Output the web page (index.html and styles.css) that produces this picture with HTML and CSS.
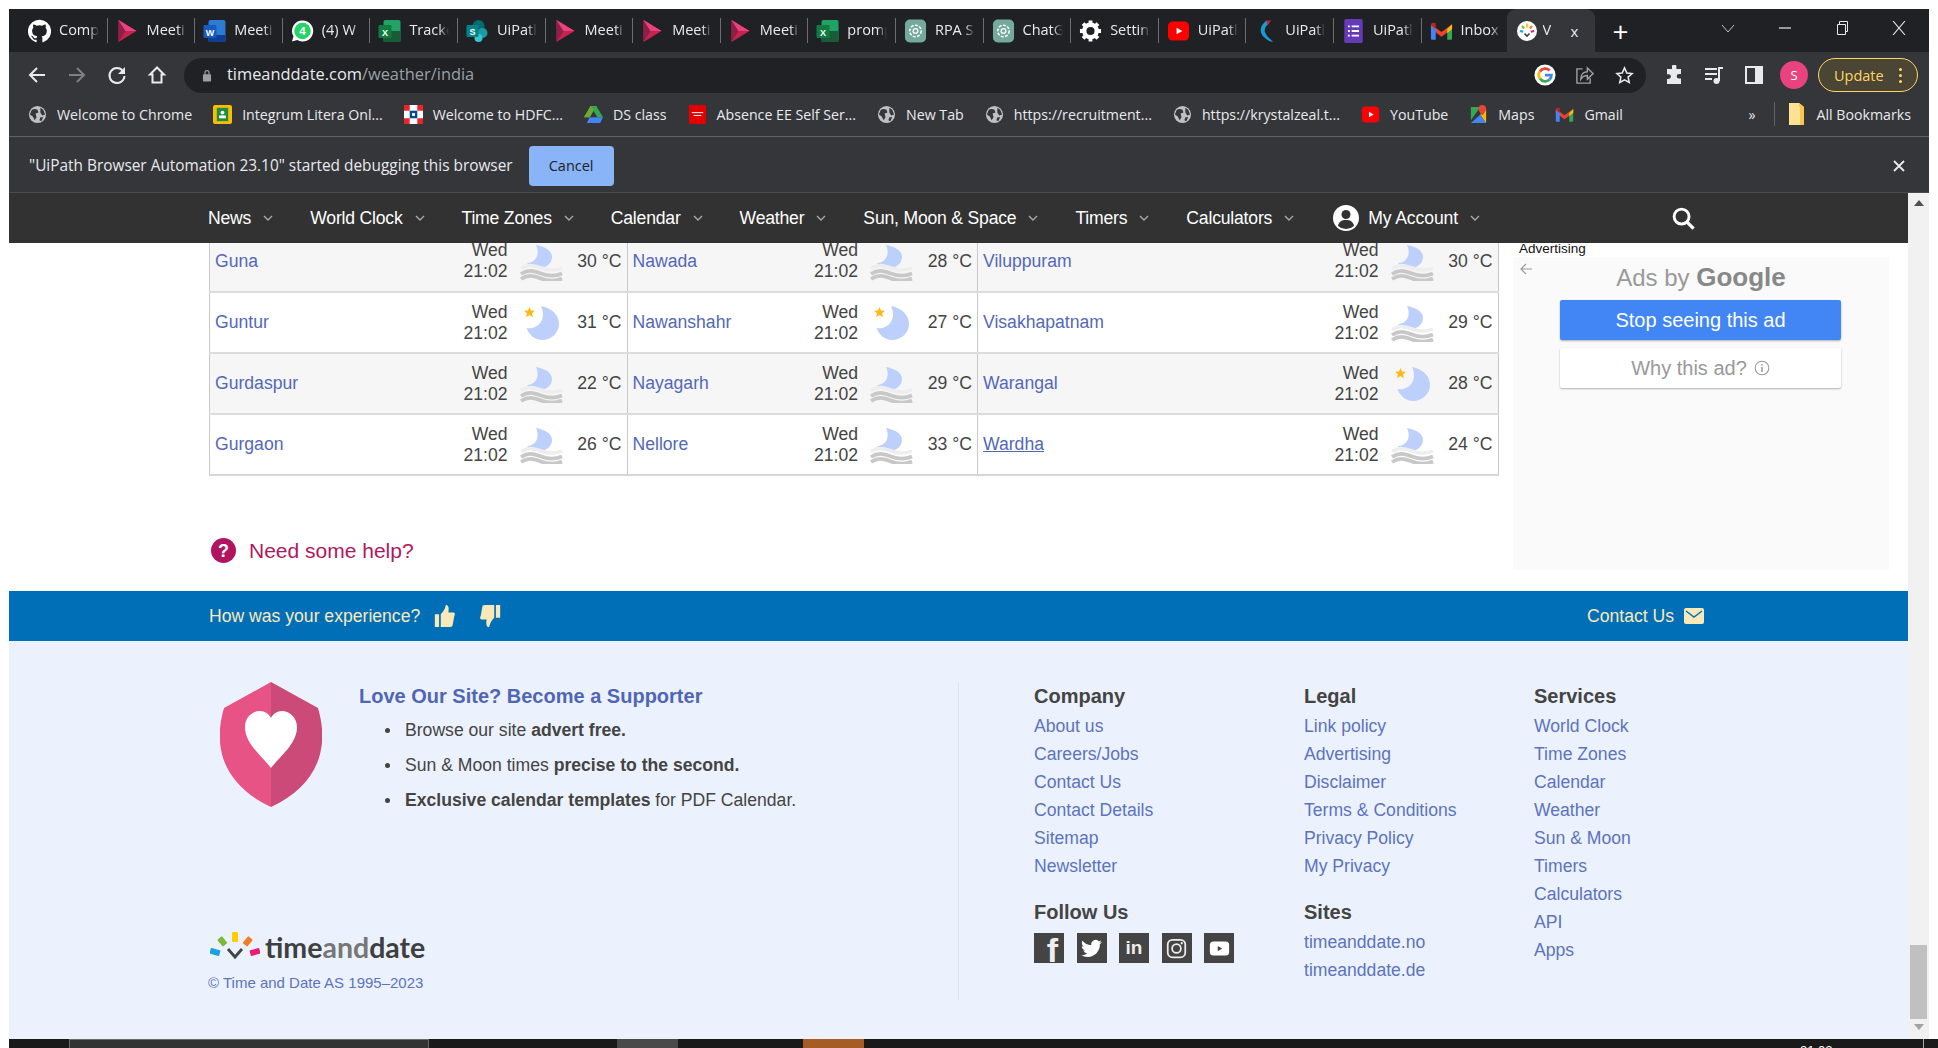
FILE: index.html
```html
<!DOCTYPE html>
<html lang="en">
<head>
    <meta charset="UTF-8">
    <title>Weather in India</title>
    <link rel="stylesheet" href="styles.css">
</head>
<body>
<svg class="sprite" width="0" height="0">
    <symbol id="i-github" viewBox="0 0 24 24"><path fill="#fff" d="M12 .3a12 12 0 0 0-3.8 23.4c.6.1.8-.3.8-.6v-2c-3.3.7-4-1.6-4-1.6-.6-1.4-1.4-1.8-1.4-1.8-1-.7.1-.7.1-.7 1.2 0 1.9 1.2 1.9 1.2 1 1.8 2.8 1.3 3.5 1 0-.8.4-1.3.7-1.6-2.7-.3-5.5-1.3-5.5-6 0-1.2.5-2.3 1.3-3.1-.2-.4-.6-1.6 0-3.2 0 0 1-.3 3.4 1.2a11.5 11.5 0 0 1 6 0c2.3-1.5 3.3-1.2 3.3-1.2.6 1.6.2 2.8 0 3.2.9.8 1.3 1.9 1.3 3.2 0 4.6-2.8 5.6-5.5 5.9.5.4.9 1 .9 2.2v3.3c0 .3.1.7.8.6A12 12 0 0 0 12 .3"/></symbol>
    <symbol id="i-meet" viewBox="0 0 20 24"><path fill="#c8234e" d="M1 1l18 11L1 23z"/><path fill="#8c2146" d="M1 1l7 11-7 11z"/><path fill="#e8437f" d="M8 12L1 1l18 11z"/></symbol>
    <symbol id="i-word" viewBox="0 0 22 24"><rect x="5" y="1" width="17" height="22" rx="2" fill="#2b7cd3"/><rect x="5" y="16" width="17" height="7" fill="#103f91"/><rect x="0" y="6" width="13" height="13" rx="1" fill="#185abd"/><text x="6.5" y="16.5" class="ico-txt">W</text></symbol>
    <symbol id="i-excel" viewBox="0 0 22 24"><rect x="5" y="1" width="17" height="22" rx="2" fill="#21a366"/><rect x="5" y="12" width="17" height="11" fill="#185c37"/><rect x="0" y="6" width="13" height="13" rx="1" fill="#107c41"/><text x="6.5" y="16.5" class="ico-txt">X</text></symbol>
    <symbol id="i-whatsapp" viewBox="0 0 24 24"><path fill="#fff" d="M12 1a11 11 0 0 0-9.4 16.6L1 23l5.6-1.5A11 11 0 1 0 12 1z"/><circle cx="12" cy="12" r="8.6" fill="#25d366"/><text x="12" y="16.5" class="ico-txt ico-big">4</text></symbol>
    <symbol id="i-share" viewBox="0 0 22 24"><circle cx="12" cy="7" r="6" fill="#036c70"/><circle cx="16" cy="14" r="5" fill="#1a9ba1"/><circle cx="12" cy="19" r="4" fill="#37c6d0"/><rect x="0" y="6" width="12" height="12" rx="1" fill="#038387"/><text x="6" y="16" class="ico-txt">S</text></symbol>
    <symbol id="i-gpt" viewBox="0 0 24 24"><rect x="1" width="22" height="24" rx="5" fill="#74aa9c"/><circle cx="12" cy="12" r="6" fill="none" stroke="#fff" stroke-width="1.6" stroke-dasharray="3 1.5"/><circle cx="12" cy="12" r="2.5" fill="none" stroke="#fff" stroke-width="1.3"/></symbol>
    <symbol id="i-gear" viewBox="0 0 24 24"><circle cx="12" cy="12" r="6.5" fill="none" stroke="#fff" stroke-width="4.5"/><path stroke="#fff" stroke-width="4" d="M12 1v5M12 18v5M1 12h5M18 12h5M4.2 4.2l3.6 3.6M16.2 16.2l3.6 3.6M4.2 19.8l3.6-3.6M16.2 7.8l3.6-3.6"/></symbol>
    <symbol id="i-yt" viewBox="0 0 24 24"><rect x="1" y="2" width="22" height="20" rx="5" fill="#f00"/><path fill="#fff" d="M10 8.500l6 3.500-6 3.500z"/></symbol>
    <symbol id="i-k" viewBox="0 0 24 24"><path fill="#1a9ad6" d="M16 4C9 9 9 15 20 23l-3 0C6 17 3 9 13 1z"/><path fill="#c0272d" d="M13 1h5l-4 5z"/></symbol>
    <symbol id="i-forms" viewBox="0 0 20 26"><rect width="20" height="26" rx="2" fill="#673ab7"/><path stroke="#fff" stroke-width="2" d="M4 8h2M8 8h8M4 13h2M8 13h8M4 18h2M8 18h8"/></symbol>
    <symbol id="i-gmail" viewBox="0 0 24 20"><path fill="#ea4335" d="M1 3l11 8 11-8v5l-11 8L1 8z"/><path fill="#4285f4" d="M1 4v14a1 1 0 0 0 1 1h4V8z"/><path fill="#34a853" d="M23 4v14a1 1 0 0 1-1 1h-4V8z"/><path fill="#fbbc04" d="M18 8l5-5v5l-5 4z"/><path fill="#c5221f" d="M1 3c1-2 3-2 5-1v6L1 4z"/></symbol>
    <symbol id="i-tad" viewBox="0 0 24 24"><circle cx="12" cy="12" r="12" fill="#fff"/><rect x="11" y="3" width="2.500" height="5" fill="#fc0"/><path stroke="#7ab939" stroke-width="2.500" d="M6 6l2.500 3"/><path stroke="#f07f23" stroke-width="2.500" d="M18 6l-2.500 3"/><path stroke="#1aa3dc" stroke-width="2.500" d="M3.500 12l4 1"/><path stroke="#e91e72" stroke-width="2.500" d="M20.500 12l-4 1"/><path fill="none" stroke="#444" stroke-width="2" d="M9 15l3 3 3-3"/></symbol>
    <symbol id="i-globe" viewBox="0 0 20 20"><circle cx="10" cy="10" r="9" fill="#bdc1c6"/><path fill="#35363a" d="M4 5c2-1 4-1 6 0l1 3-3 1 1 4-2 3-2-4-3-2zM13 3l3 2 2 5-3 1-2-3zM13 13l3 0-2 4-2-1z"/></symbol>
    <symbol id="i-fog" viewBox="0 0 43 36"><path fill="#bcd0fb" d="M16 0C26 2 32 6 32 12 32 19 25 24 17 23 13 23 9 21 7 18 14 18 21 11 16 0z"/><path fill="none" stroke="#eee" stroke-width="3.500" d="M1 23.500C8 19 13 20 21 23S35 26 42 23"/><path fill="none" stroke="#c8c8c8" stroke-width="3.800" d="M1 29C8 24.500 13 25.500 21 28.500S35 31.500 42 28.500"/><path fill="none" stroke="#c8c8c8" stroke-width="3.800" d="M1 34C8 29.500 13 30.500 21 33.500S35 36.500 42 33.500"/></symbol>
    <symbol id="i-moon" viewBox="0 0 35 34"><path fill="#bcd0fb" d="M17 0C28 2 35 9 35 18 35 27 27 34 18 34 11 34 5 29 2.500 22 11 24 24 16 17 0z"/><path fill="#fdb813" d="M5.500 1l1.500 3.500 4 .3-3 2.500 1 4-3.500-2.200L2 11.300l1-4-3-2.500 4-.3z"/></symbol>
    <symbol id="i-chev" viewBox="0 0 10 6"><path fill="none" stroke="#a9a9a9" stroke-width="1.400" d="M1 1l4 4 4-4"/></symbol>
</svg>

<div class="window">
    <div class="tabstrip">
        <div class="tab"><svg class="fav"><use href="#i-github"/></svg><span class="tab-title">Comp</span></div>
        <div class="tab"><svg class="fav"><use href="#i-meet"/></svg><span class="tab-title">Meeti</span></div>
        <div class="tab"><svg class="fav"><use href="#i-word"/></svg><span class="tab-title">Meeti</span></div>
        <div class="tab"><svg class="fav"><use href="#i-whatsapp"/></svg><span class="tab-title">(4) W</span></div>
        <div class="tab"><svg class="fav"><use href="#i-excel"/></svg><span class="tab-title">Tracke</span></div>
        <div class="tab"><svg class="fav"><use href="#i-share"/></svg><span class="tab-title">UiPatl</span></div>
        <div class="tab"><svg class="fav"><use href="#i-meet"/></svg><span class="tab-title">Meeti</span></div>
        <div class="tab"><svg class="fav"><use href="#i-meet"/></svg><span class="tab-title">Meeti</span></div>
        <div class="tab"><svg class="fav"><use href="#i-meet"/></svg><span class="tab-title">Meeti</span></div>
        <div class="tab"><svg class="fav"><use href="#i-excel"/></svg><span class="tab-title">promp</span></div>
        <div class="tab"><svg class="fav"><use href="#i-gpt"/></svg><span class="tab-title">RPA S</span></div>
        <div class="tab"><svg class="fav"><use href="#i-gpt"/></svg><span class="tab-title">ChatG</span></div>
        <div class="tab"><svg class="fav"><use href="#i-gear"/></svg><span class="tab-title">Settin</span></div>
        <div class="tab"><svg class="fav"><use href="#i-yt"/></svg><span class="tab-title">UiPatl</span></div>
        <div class="tab"><svg class="fav"><use href="#i-k"/></svg><span class="tab-title">UiPatl</span></div>
        <div class="tab"><svg class="fav"><use href="#i-forms"/></svg><span class="tab-title">UiPatl</span></div>
        <div class="tab tab-last"><svg class="fav"><use href="#i-gmail"/></svg><span class="tab-title">Inbox</span></div>
        <div class="tab tab-active"><svg class="fav"><use href="#i-tad"/></svg><span class="tab-title tab-title-short">V</span><span class="tab-x">x</span></div>
        <span class="tab-new">+</span>
        <div class="winctl">
            <svg class="ctl" viewBox="0 0 14 14"><path fill="none" stroke="#bdc1c6" d="M1 4l6 7 6-7"/></svg>
            <svg class="ctl" viewBox="0 0 14 14"><path stroke="#e8eaed" stroke-width="1.200" d="M1 7h12"/></svg>
            <svg class="ctl" viewBox="0 0 14 14"><path fill="none" stroke="#e8eaed" d="M2.500 3.500h8v10h-8zM4.500 3.500V.5h8v10h-2"/></svg>
            <svg class="ctl" viewBox="0 0 14 14"><path stroke="#e8eaed" stroke-width="1.100" d="M1 0l12 14M13 0L1 14"/></svg>
        </div>
    </div>

    <div class="toolbar">
        <svg class="tb-ico" viewBox="0 0 20 20"><path fill="none" stroke="#e8eaed" stroke-width="2" d="M18 10H3M10 3l-7 7 7 7"/></svg>
        <svg class="tb-ico" viewBox="0 0 20 20"><path fill="none" stroke="#7d8085" stroke-width="2" d="M2 10h15M10 3l7 7-7 7"/></svg>
        <svg class="tb-ico" viewBox="0 0 20 20"><path fill="none" stroke="#e8eaed" stroke-width="2" d="M16 6a7.500 7.500 0 1 0 1.500 5"/><path fill="#e8eaed" d="M18 2v7h-7z"/></svg>
        <svg class="tb-ico" viewBox="0 0 20 20"><path fill="none" stroke="#e8eaed" stroke-width="2" d="M10 2.500L3 9.500h2.500v8h9v-8H17z"/></svg>
        <div class="omnibox">
            <svg class="lock" viewBox="0 0 12 16"><path fill="none" stroke="#9aa0a6" stroke-width="1.500" d="M3.500 7V4.500a2.500 2.500 0 0 1 5 0V7"/><rect x="1" y="6.500" width="10" height="9" rx="1" fill="#9aa0a6"/></svg>
            <span class="url">timeanddate.com<span class="url-path">/weather/india</span></span>
            <svg class="omni-g" viewBox="0 0 24 24"><circle cx="12" cy="12" r="11.500" fill="#fff"/><path fill="none" stroke="#4285f4" stroke-width="3" d="M12 12h7a7 7 0 0 1-2 5"/><path fill="none" stroke="#34a853" stroke-width="3" d="M17 17a7 7 0 0 1-10.500-1"/><path fill="none" stroke="#fbbc04" stroke-width="3" d="M6.500 16a7 7 0 0 1 0-8"/><path fill="none" stroke="#ea4335" stroke-width="3" d="M6.500 8a7 7 0 0 1 10.500-1"/></svg>
            <svg class="omni-ico" viewBox="0 0 20 20"><path fill="none" stroke="#9aa0a6" stroke-width="1.500" d="M8 3H2v15h14v-5M6 14c0-6 4-8 7-8V2l6 6-6 6v-4c-3 0-5 1-7 4z"/></svg>
            <svg class="omni-ico" viewBox="0 0 20 20"><path fill="none" stroke="#e8eaed" stroke-width="1.600" d="M10 2l2.400 5.300 5.600.6-4.200 3.800 1.200 5.700-5-2.900-5 2.900 1.200-5.700L2 7.900l5.600-.6z"/></svg>
        </div>
        <svg class="tb-ico tb-puzzle" viewBox="0 0 20 20"><path fill="#e8eaed" d="M8 1.500a2.200 2.200 0 0 1 4.400 0V4H17v5h-2a2.300 2.300 0 0 0 0 4.600h2V19H3v-5h1.500a2.400 2.400 0 0 0 0-4.800H3V4h5z"/></svg>
        <svg class="tb-ico" viewBox="0 0 20 20"><path stroke="#e8eaed" stroke-width="2" fill="none" d="M1 4h12M1 9h12M1 14h7M15 16V3h4"/><circle cx="12.500" cy="16" r="3" fill="#e8eaed"/></svg>
        <svg class="tb-ico" viewBox="0 0 20 20"><rect x="2" y="2" width="16" height="16" fill="none" stroke="#e8eaed" stroke-width="2"/><rect x="11" y="2" width="7" height="16" fill="#e8eaed"/></svg>
        <span class="profile">S</span>
        <span class="update">Update<i class="dots"></i></span>
    </div>

    <div class="bookmarks">
        <span class="bm"><svg class="bm-ico"><use href="#i-globe"/></svg>Welcome to Chrome</span>
        <span class="bm"><svg class="bm-ico" viewBox="0 0 20 20"><rect width="20" height="20" rx="2" fill="#fbbc04"/><rect x="4" y="3" width="12" height="14" fill="#1e8e3e"/><circle cx="10" cy="8" r="2" fill="#fff"/><rect x="6.500" y="11" width="7" height="3" fill="#fff"/></svg>Integrum Litera Onl...</span>
        <span class="bm"><svg class="bm-ico" viewBox="0 0 20 20"><rect width="20" height="20" fill="#ed232a"/><path fill="#fff" d="M0 6h6V0h8v6h6v8h-6v6H6v-6H0z"/><rect x="6" y="6" width="8" height="8" fill="#004c8f"/><rect x="8.500" y="8.500" width="3" height="3" fill="#fff"/></svg>Welcome to HDFC...</span>
        <span class="bm"><svg class="bm-ico" viewBox="0 0 20 20"><path fill="#fbbc04" d="M7 1h6l-7 12H0z"/><path fill="#34a853" d="M13 1l7 12h-6L7 1z"/><path fill="#4285f4" d="M6 13h14l-3 6H3z"/><path fill="#0f9d58" d="M7 1l3 5-4 7H0z" opacity=".6"/></svg>DS class</span>
        <span class="bm"><svg class="bm-ico" viewBox="0 0 20 20"><rect x="1" width="18" height="20" rx="1" fill="#e30000"/><path stroke="#fff" stroke-width="1" d="M4 8h12M6 11h8"/></svg>Absence EE Self Ser...</span>
        <span class="bm"><svg class="bm-ico"><use href="#i-globe"/></svg>New Tab</span>
        <span class="bm"><svg class="bm-ico"><use href="#i-globe"/></svg>https://recruitment...</span>
        <span class="bm"><svg class="bm-ico"><use href="#i-globe"/></svg>https://krystalzeal.t...</span>
        <span class="bm"><svg class="bm-ico"><use href="#i-yt"/></svg>YouTube</span>
        <span class="bm"><svg class="bm-ico" viewBox="0 0 20 20"><path fill="#34a853" d="M2 2h10L2 16z"/><path fill="#4285f4" d="M2 19l10-9 6 9z"/><path fill="#fbbc04" d="M12 10l6-6v15z"/><path fill="#ea4335" d="M14 0a4 4 0 0 1 4 4c0 3-4 7-4 7s-4-4-4-7a4 4 0 0 1 4-4z"/></svg>Maps</span>
        <span class="bm"><svg class="bm-ico"><use href="#i-gmail"/></svg>Gmail</span>
        <span class="bm-more">»</span>
        <span class="bm-all"><svg class="bm-folder" viewBox="0 0 15 24"><path fill="#fde293" d="M0 1h10l5 4v18H0z"/><path fill="#f9c74f" d="M10 1l5 4h-5zM11 5h4v18h-4z"/></svg>All Bookmarks</span>
    </div>

    <div class="infobar">
        <span>"UiPath Browser Automation 23.10" started debugging this browser</span>
        <button class="cancel">Cancel</button>
        <svg class="info-x" viewBox="0 0 12 12"><path stroke="#e8eaed" stroke-width="1.800" d="M1 1l10 10M11 1L1 11"/></svg>
    </div>

    <div class="view">
        <div class="page">
            <nav class="nav">
                <a class="nav-item">News<svg class="chev"><use href="#i-chev"/></svg></a>
                <a class="nav-item">World Clock<svg class="chev"><use href="#i-chev"/></svg></a>
                <a class="nav-item">Time Zones<svg class="chev"><use href="#i-chev"/></svg></a>
                <a class="nav-item">Calendar<svg class="chev"><use href="#i-chev"/></svg></a>
                <a class="nav-item">Weather<svg class="chev"><use href="#i-chev"/></svg></a>
                <a class="nav-item">Sun, Moon &amp; Space<svg class="chev"><use href="#i-chev"/></svg></a>
                <a class="nav-item">Timers<svg class="chev"><use href="#i-chev"/></svg></a>
                <a class="nav-item">Calculators<svg class="chev"><use href="#i-chev"/></svg></a>
                <a class="nav-item nav-account"><svg class="avatar" viewBox="0 0 26 26"><circle cx="13" cy="13" r="13" fill="#fff"/><circle cx="13" cy="9.500" r="4.500" fill="#333"/><path fill="#333" d="M5 21c1-5 4-6 8-6s7 1 8 6a12 12 0 0 1-16 0z"/></svg>My Account<svg class="chev"><use href="#i-chev"/></svg></a>
                <svg class="nav-search" viewBox="0 0 24 24"><circle cx="10" cy="10" r="7.800" fill="none" stroke="#fff" stroke-width="3"/><path stroke="#fff" stroke-width="3.500" d="M15.500 15.500l7 7"/></svg>
            </nav>

            <div class="main">
                <div class="main-left">
                    <table class="cities">
                        <colgroup>
                            <col class="c-n1"><col class="c-t"><col class="c-i"><col class="c-d">
                            <col class="c-n2"><col class="c-t"><col class="c-i"><col class="c-d">
                            <col class="c-n3"><col class="c-t"><col class="c-i"><col class="c-d">
                        </colgroup>
                        <tr class="odd">
                            <td class="name"><a>Guna</a></td><td class="time">Wed<br>21:02</td><td class="ico"><svg class="fog"><use href="#i-fog"/></svg></td><td class="deg">30 °C</td>
                            <td class="name"><a>Nawada</a></td><td class="time">Wed<br>21:02</td><td class="ico"><svg class="fog"><use href="#i-fog"/></svg></td><td class="deg">28 °C</td>
                            <td class="name"><a>Viluppuram</a></td><td class="time">Wed<br>21:02</td><td class="ico"><svg class="fog"><use href="#i-fog"/></svg></td><td class="deg">30 °C</td>
                        </tr>
                        <tr>
                            <td class="name"><a>Guntur</a></td><td class="time">Wed<br>21:02</td><td class="ico"><svg class="moon"><use href="#i-moon"/></svg></td><td class="deg">31 °C</td>
                            <td class="name"><a>Nawanshahr</a></td><td class="time">Wed<br>21:02</td><td class="ico"><svg class="moon"><use href="#i-moon"/></svg></td><td class="deg">27 °C</td>
                            <td class="name"><a>Visakhapatnam</a></td><td class="time">Wed<br>21:02</td><td class="ico"><svg class="fog"><use href="#i-fog"/></svg></td><td class="deg">29 °C</td>
                        </tr>
                        <tr class="odd">
                            <td class="name"><a>Gurdaspur</a></td><td class="time">Wed<br>21:02</td><td class="ico"><svg class="fog"><use href="#i-fog"/></svg></td><td class="deg">22 °C</td>
                            <td class="name"><a>Nayagarh</a></td><td class="time">Wed<br>21:02</td><td class="ico"><svg class="fog"><use href="#i-fog"/></svg></td><td class="deg">29 °C</td>
                            <td class="name"><a>Warangal</a></td><td class="time">Wed<br>21:02</td><td class="ico"><svg class="moon"><use href="#i-moon"/></svg></td><td class="deg">28 °C</td>
                        </tr>
                        <tr>
                            <td class="name"><a>Gurgaon</a></td><td class="time">Wed<br>21:02</td><td class="ico"><svg class="fog"><use href="#i-fog"/></svg></td><td class="deg">26 °C</td>
                            <td class="name"><a>Nellore</a></td><td class="time">Wed<br>21:02</td><td class="ico"><svg class="fog"><use href="#i-fog"/></svg></td><td class="deg">33 °C</td>
                            <td class="name"><a class="hover">Wardha</a></td><td class="time">Wed<br>21:02</td><td class="ico"><svg class="fog"><use href="#i-fog"/></svg></td><td class="deg">24 °C</td>
                        </tr>
                    </table>
                    <div class="help">
                        <svg class="help-ico" viewBox="0 0 25 25"><circle cx="12.500" cy="12.500" r="12.500" fill="#b2135f"/><text x="12.500" y="19" class="help-q">?</text></svg>
                        <span>Need some help?</span>
                    </div>
                </div>
                <aside class="ad">
                    <div class="ad-label">Advertising</div>
                    <div class="ad-box">
                        <svg class="ad-back" viewBox="0 0 14 14"><path fill="none" stroke="#9a9a9a" stroke-width="1.200" d="M13 7H2M7 2L2 7l5 5"/></svg>
                        <div class="ad-by">Ads by <b>Google</b></div>
                        <div class="ad-stop">Stop seeing this ad</div>
                        <div class="ad-why">Why this ad?<svg class="ad-info" viewBox="0 0 16 16"><circle cx="8" cy="8" r="6.800" fill="none" stroke="#999" stroke-width="1.100"/><path stroke="#999" stroke-width="1.500" d="M8 7v5M8 4v1.600"/></svg></div>
                    </div>
                </aside>
            </div>

            <div class="feedback">
                <span class="fb-text">How was your experience?</span>
                <svg class="thumb" viewBox="0 0 24 26"><path fill="#f9e9b8" d="M0 11h5v15H0zM7 11c3-3 5-6 6-11 3 0 4 3 3 9h6c2 0 2 3 1 4l-2 11c0 1-1 2-3 2H7z"/></svg>
                <svg class="thumb thumb-down" viewBox="0 0 24 26"><path fill="#f9e9b8" d="M24 15h-5V0h5zM17 15c-3 3-5 6-6 11-3 0-4-3-3-9H2c-2 0-2-3-1-4L3 2c0-1 1-2 3-2h11z"/></svg>
                <span class="fb-contact">Contact Us</span>
                <svg class="mail" viewBox="0 0 20 16"><rect width="20" height="16" rx="2" fill="#f9e9b8"/><path fill="none" stroke="#016fb7" stroke-width="1.400" d="M2 3l8 6 8-6"/></svg>
            </div>

            <footer class="footer">
                <div class="support">
                    <div class="support-top">
                        <svg class="shield" viewBox="0 0 102 125"><path fill="#e75384" d="M51 0L4 26C-9 70 8 105 51 125z"/><path fill="#cb4a77" d="M51 0l47 26c13 44-4 79-47 99z"/><path fill="#fff" d="M51 86C42 74 25 62 25 45c0-9 7-16 15-16 5 0 9 3 11 7 2-4 6-7 11-7 8 0 15 7 15 16 0 17-17 29-26 41z"/></svg>
                        <div>
                            <h3 class="support-title">Love Our Site? Become a Supporter</h3>
                            <ul class="support-list">
                                <li>Browse our site <b>advert free.</b></li>
                                <li>Sun &amp; Moon times <b>precise to the second.</b></li>
                                <li><b>Exclusive calendar templates</b> for PDF Calendar.</li>
                            </ul>
                        </div>
                    </div>
                    <div class="support-foot">
                        <div class="logo">
                            <svg class="logo-mark" viewBox="0 0 50 30"><rect x="0" y="17" width="10" height="6" rx="1" fill="#1aa3dc" transform="rotate(15 5 20)"/><rect x="9" y="5" width="6" height="9" rx="1" fill="#7ab939" transform="rotate(-40 12 9)"/><rect x="22" y="0" width="6" height="10" rx="1" fill="#fc0"/><rect x="35" y="5" width="6" height="9" rx="1" fill="#f07f23" transform="rotate(40 38 9)"/><rect x="40" y="17" width="10" height="6" rx="1" fill="#e91e72" transform="rotate(-15 45 20)"/><path fill="none" stroke="#444" stroke-width="2.800" d="M18 17l7 8 7-8"/></svg>
                            <span class="logo-text">time<span class="logo-and">and</span>date</span>
                        </div>
                        <div class="copy">© Time and Date AS 1995–2023</div>
                    </div>
                </div>
                <div class="ft-col ft-company">
                    <h4>Company</h4>
                    <a>About us</a><a>Careers/Jobs</a><a>Contact Us</a><a>Contact Details</a><a>Sitemap</a><a>Newsletter</a>
                    <h4 class="ft-second">Follow Us</h4>
                    <div class="social">
                        <span class="soc soc-f">f</span>
                        <span class="soc"><svg class="soc-ico" viewBox="0 0 24 24"><path fill="#fff" d="M23.950 4.570a10 10 0 0 1-2.820.77 4.960 4.960 0 0 0 2.160-2.720c-.95.55-2 .96-3.120 1.190a4.920 4.920 0 0 0-8.380 4.480C7.690 8.100 4.070 6.130 1.640 3.160a4.820 4.820 0 0 0-.66 2.470c0 1.710.87 3.210 2.190 4.100a4.900 4.900 0 0 1-2.230-.61v.06a4.920 4.920 0 0 0 3.950 4.830 5 5 0 0 1-2.210.08 4.940 4.940 0 0 0 4.600 3.420A9.870 9.870 0 0 1 0 19.540a14 14 0 0 0 7.560 2.210c9.050 0 14-7.500 14-13.980 0-.21 0-.42-.02-.63a9.940 9.940 0 0 0 2.460-2.550z"/></svg></span>
                        <span class="soc soc-in">in</span>
                        <span class="soc"><svg class="soc-ico" viewBox="0 0 24 24"><rect x="2" y="2" width="20" height="20" rx="5.500" fill="none" stroke="#eee" stroke-width="2"/><circle cx="12" cy="12" r="5" fill="none" stroke="#eee" stroke-width="2"/><circle cx="18" cy="6" r="1.300" fill="#eee"/></svg></span>
                        <span class="soc"><svg class="soc-ico" viewBox="0 0 24 24"><rect x="1" y="4" width="22" height="16" rx="4" fill="#fff"/><path fill="#444" d="M10 9l5 3-5 3z"/></svg></span>
                    </div>
                </div>
                <div class="ft-col ft-legal">
                    <h4>Legal</h4>
                    <a>Link policy</a><a>Advertising</a><a>Disclaimer</a><a>Terms &amp; Conditions</a><a>Privacy Policy</a><a>My Privacy</a>
                    <h4 class="ft-second">Sites</h4>
                    <a>timeanddate.no</a><a>timeanddate.de</a>
                </div>
                <div class="ft-col">
                    <h4>Services</h4>
                    <a>World Clock</a><a>Time Zones</a><a>Calendar</a><a>Weather</a><a>Sun &amp; Moon</a><a>Timers</a><a>Calculators</a><a>API</a><a>Apps</a>
                </div>
            </footer>
        </div>
        <div class="scrollbar">
            <i class="sb-up"></i>
            <i class="sb-thumb"></i>
            <i class="sb-down"></i>
        </div>
    </div>
</div>

<div class="taskbar">
    <i class="tk-start"></i>
    <i class="tk-search"></i>
    <i class="tk-gap1"></i>
    <i class="tk-app"></i>
    <i class="tk-gap2"></i>
    <i class="tk-orange"></i>
    <span class="tk-clock">21:02</span>
    <i class="tk-line"></i>
</div>
</body>
</html>
```

FILE: styles.css
```css
*{
    margin: 0;
    padding: 0;
    box-sizing: border-box;
}
html,body{
    height: 100%;
    overflow: hidden;
}
body{
    background: #fff;
    font-family: "Liberation Sans", Arial, sans-serif;
    display: flex;
    flex-direction: column;
}
.sprite{
    display: none;
}
.ico-txt{
    font: bold 9px "Liberation Sans", sans-serif;
    fill: #fff;
    text-anchor: middle;
}
.ico-big{
    font-size: 12px;
}

/* browser window */
.window{
    height: 1030px;
    width: 1920px;
    margin: 9px 0 0 9px;
    display: flex;
    flex-direction: column;
    font-family: "Open Sans", sans-serif;
    color: #e8eaed;
}
.tabstrip{
    height: 43px;
    background: #202124;
    display: flex;
    align-items: center;
    padding-left: 11px;
    flex: none;
}
.tab{
    flex: 0 0 87.6px;
    height: 25px;
    display: flex;
    align-items: center;
    padding-left: 8px;
    gap: 8px;
    border-right: 1px solid #6b6d71;
}
.tab-last{
    border-right: 0;
    flex-basis: 85px;
}
.fav{
    width: 23px;
    height: 24px;
    flex: none;
}
.tab-title{
    width: 40px;
    font-size: 14.500px;
    line-height: 20px;
    margin-top: -2px;
    white-space: nowrap;
    overflow: hidden;
    -webkit-mask-image: linear-gradient(to right,#000 75%,transparent);
    mask-image: linear-gradient(to right,#000 75%,transparent);
}
.tab-active{
    flex: 0 0 88px;
    height: 43px;
    background: #35363a;
    border-right: 0;
    border-radius: 9px 9px 0 0;
    padding-left: 10px;
    gap: 6px;
}
.tab-active .fav{
    width: 20px;
    height: 20px;
}
.tab-title-short{
    width: 12px;
}
.tab-x{
    margin-left: 10px;
    font-size: 15px;
}
.tab-new{
    font-size: 28px;
    font-weight: 400;
    margin: 1px 0 0 18px;
    width: 20px;
    color: #fff;
}
.winctl{
    display: flex;
    margin-left: 88px;
    gap: 43px;
    margin-top: -6px;
}
.ctl{
    width: 14px;
    height: 14px;
}

.toolbar{
    height: 46px;
    background: #35363a;
    display: flex;
    align-items: center;
    padding-left: 18px;
    flex: none;
}
.tb-ico{
    width: 20px;
    height: 20px;
    margin-right: 20px;
    flex: none;
}
.omnibox{
    width: 1462px;
    height: 35px;
    margin: 0 0 0 -3px;
    background: #202124;
    border-radius: 18px;
    display: flex;
    align-items: center;
    padding-left: 18px;
    flex: none;
}
.lock{
    width: 10px;
    height: 13px;
    margin-right: 15px;
}
.url{
    font-size: 16.400px;
    line-height: 20px;
    margin-top: -2px;
    flex: 1;
}
.url-path{
    color: #9aa0a6;
}
.omni-g{
    width: 22px;
    height: 22px;
    margin-right: 19px;
}
.omni-ico{
    width: 19px;
    height: 19px;
    margin-right: 21px;
}
.omni-ico:last-child{
    margin-right: 12px;
}
.tb-puzzle{
    margin-left: 18px;
}
.profile{
    width: 28px;
    height: 28px;
    margin-left: -4px;
    border-radius: 50%;
    background: #e8437f;
    color: #fff;
    font-size: 13px;
    display: flex;
    align-items: center;
    justify-content: center;
    flex: none;
}
.update{
    margin-left: 10px;
    width: 100px;
    height: 34px;
    border: 1px solid #fdd663;
    border-radius: 17px;
    background: #4b4536;
    color: #fdd663;
    font-size: 14.500px;
    display: flex;
    align-items: center;
    padding-left: 15px;
    flex: none;
}
.dots{
    width: 3px;
    height: 3px;
    border-radius: 50%;
    background: #fdd663;
    box-shadow: 0 -6px #fdd663, 0 6px #fdd663;
    margin-left: 15px;
}

.bookmarks{
    height: 39px;
    padding: 0 0 6px 19px;
    background: #35363a;
    border-bottom: 1px solid #5f6368;
    display: flex;
    align-items: center;
    gap: 21px;
    font-size: 14.200px;
    flex: none;
}
.bm{
    display: flex;
    align-items: center;
    gap: 10px;
    white-space: nowrap;
}
.bm-ico{
    width: 19px;
    height: 19px;
    flex: none;
}
.bm-more{
    margin-left: auto;
    margin-right: -2px;
}
.bm-all{
    display: flex;
    align-items: center;
    border-left: 1px solid #5f6368;
    height: 24px;
    padding-left: 14px;
    gap: 12px;
    margin-right: 18px;
}
.bm-folder{
    width: 15px;
    height: 24px;
}

.infobar{
    height: 56px;
    padding: 2px 0 0 20px;
    background: #35363a;
    border-bottom: 1px solid #4a4b4f;
    display: flex;
    align-items: center;
    font-size: 15.400px;
    flex: none;
}
.cancel{
    width: 85px;
    height: 40px;
    margin-left: 16px;
    background: #8ab4f8;
    border: 0;
    border-radius: 4px;
    color: #202124;
    font: 14.500px "Open Sans", sans-serif;
}
.info-x{
    width: 12px;
    height: 12px;
    margin-left: auto;
    margin-right: 24px;
}

/* page */
.view{
    flex: 1;
    display: flex;
    min-height: 0;
}
.page{
    flex: 1;
    min-width: 0;
    display: flex;
    flex-direction: column;
    font-family: "Liberation Sans", Arial, sans-serif;
    font-size: 17.600px;
    color: #444;
}
.nav{
    height: 50px;
    background: #323232;
    display: flex;
    align-items: center;
    padding-left: 199px;
    gap: 37px;
    color: #fff;
    flex: none;
}
.nav-item{
    display: flex;
    align-items: center;
    letter-spacing: -.2px;
}
.nav-account{
    letter-spacing: -.1px;
}
.chev{
    width: 10px;
    height: 6px;
    margin-left: 12px;
}
.avatar{
    width: 26px;
    height: 26px;
    margin: 0 9px 0 2px;
}
.nav-search{
    width: 23px;
    height: 23px;
    margin-left: 155px;
}

.main{
    height: 348px;
    display: flex;
    padding-left: 200px;
    overflow: hidden;
    flex: none;
    background: #fff;
}
.main-left{
    width: 1289px;
    flex: none;
}
.cities{
    width: 1289.500px;
    margin-top: -12px;
    table-layout: fixed;
    border-collapse: collapse;
    border-bottom: 2px solid #d6d6d6;
    line-height: 21px;
}
.c-n1{
    width: 243px;
}
.c-n2{
    width: 176px;
}
.c-n3{
    width: 346px;
}
.c-t{
    width: 60px;
}
.c-i{
    width: 57.500px;
}
.c-d{
    width: 57px;
}
.cities tr{
    height: 61px;
    border-bottom: 2px solid #dcdcdc;
}
.cities tr:last-child{
    border-bottom: 0;
}
.cities .odd{
    background: #f6f6f6;
}
.cities td{
    padding: 0 5px;
    white-space: nowrap;
}
.cities .ico{
    padding: 0;
    line-height: 0;
    text-align: center;
}
.name{
    border-left: 1px solid #c8c8c8;
}
.cities tr td:last-child{
    border-right: 1px solid #c8c8c8;
}
.name a{
    color: #5468b8;
}
.name .hover{
    text-decoration: underline;
}
.time,.deg{
    text-align: right;
}
.fog{
    width: 43px;
    height: 36px;
    margin-top: 3px;
}
.moon{
    width: 35px;
    height: 34px;
    margin-top: 1px;
}
.help{
    margin: 62px 0 0 2px;
    display: flex;
    align-items: center;
    gap: 13px;
    color: #b0185f;
    font-size: 21px;
}
.help-ico{
    width: 25px;
    height: 25px;
}
.help-q{
    font: bold 18px "Liberation Sans", sans-serif;
    fill: #fff;
    text-anchor: middle;
}

.ad{
    width: 376px;
    margin-left: 15px;
    flex: none;
}
.ad-label{
    height: 14px;
    font-size: 13.500px;
    line-height: 12px;
    color: #111;
    padding-left: 6px;
}
.ad-box{
    height: 313px;
    background: #fafafa;
    padding: 5px 0 0;
}
.ad-back{
    display: block;
    width: 14px;
    height: 14px;
    margin-left: 6px;
}
.ad-by{
    text-align: center;
    font-size: 24px;
    line-height: 30px;
    color: #999;
    margin-top: -14px;
    font-family: "Liberation Sans", sans-serif;
}
.ad-by b{
    font-size: 26px;
    color: #888;
}
.ad-stop,.ad-why{
    width: 281px;
    height: 40px;
    margin-left: 47px;
    border-radius: 2px;
    text-align: center;
    line-height: 40px;
    font-size: 20px;
    box-shadow: 0 1px 2px rgba(0,0,0,.3);
}
.ad-stop{
    margin-top: 7px;
    background: #4285f4;
    color: #fff;
}
.ad-why{
    margin-top: 8px;
    background: #fff;
    color: #999;
    display: flex;
    align-items: center;
    justify-content: center;
    gap: 7px;
}
.ad-info{
    width: 16px;
    height: 16px;
}

.feedback{
    height: 50px;
    background: #016fb7;
    color: #f9e9b8;
    display: flex;
    align-items: center;
    padding-left: 200px;
    flex: none;
}
.thumb{
    width: 24px;
    height: 22px;
    margin-left: 13px;
}
.thumb-down{
    margin-left: 21px;
}
.fb-contact{
    margin-left: auto;
}
.mail{
    width: 20px;
    height: 16px;
    margin: 0 204px 0 10px;
}

.footer{
    flex: 1;
    background: #ebf2fd;
    display: flex;
    padding: 41px 0 39px 200px;
    min-height: 0;
}
.support{
    width: 750px;
    border-right: 1px solid #dde3ee;
    display: flex;
    flex-direction: column;
    flex: none;
}
.support-top{
    display: flex;
}
.shield{
    width: 102px;
    height: 125px;
    margin: 0 37px 0 11px;
    flex: none;
}
.support-title{
    font-size: 20px;
    line-height: 28px;
    color: #5066b5;
}
.support-list{
    margin-top: 3px;
    padding-left: 46px;
    line-height: 35px;
    list-style: none;
}
.support-list li::before{
    content: "";
    display: inline-block;
    width: 5px;
    height: 5px;
    margin: 0 15px 2px -20px;
    border-radius: 50%;
    background: #444;
    vertical-align: middle;
}
.support-foot{
    margin-top: auto;
    padding-bottom: 7px;
}
.logo{
    display: flex;
    align-items: center;
    gap: 5px;
    margin-left: 1px;
}
.logo-mark{
    width: 50px;
    height: 30px;
}
.logo-text{
    font: 700 28.500px/30px "Lato", sans-serif;
    color: #3f3f3f;
}
.logo-and{
    color: #777;
}
.copy{
    margin-top: 11px;
    font-size: 15px;
    line-height: 20px;
    color: #5d73bd;
    margin-left: -1px;
}

.ft-col a{
    display: block;
    line-height: 28px;
    color: #5d73bd;
}
.ft-col h4{
    font-size: 20px;
    line-height: 28px;
    margin-bottom: 2px;
    color: #444;
}
.ft-company{
    width: 270px;
    margin-left: 75px;
    flex: none;
}
.ft-legal{
    width: 230px;
    flex: none;
}
.ft-col .ft-second{
    margin-top: 18px;
}
.social{
    display: flex;
    gap: 12.500px;
    margin-top: 7px;
}
.soc{
    width: 30px;
    height: 30px;
    background: #444;
    color: #eee;
    display: flex;
    align-items: center;
    justify-content: center;
    overflow: hidden;
    font-weight: bold;
}
.soc-f{
    font-size: 34px;
    padding: 4px 0 0 7px;
    line-height: 30px;
}
.soc-in{
    font-size: 19px;
}
.soc-ico{
    width: 21px;
    height: 21px;
}

.scrollbar{
    width: 21px;
    background: #f1f1f1;
    display: flex;
    flex-direction: column;
    align-items: center;
    flex: none;
}
.sb-up{
    width: 0;
    height: 0;
    margin-top: 7px;
    border: 5px solid transparent;
    border-top: 0;
    border-bottom: 6px solid #505050;
}
.sb-thumb{
    width: 17px;
    height: 74px;
    margin-top: 739px;
    background: #c0c0c0;
}
.sb-down{
    width: 0;
    height: 0;
    margin-top: 5px;
    border: 5px solid transparent;
    border-bottom: 0;
    border-top: 6px solid #a3a3a3;
}

.taskbar{
    height: 9px;
    margin-left: 9px;
    background: #1a1a1a;
    display: flex;
    overflow: hidden;
    flex: none;
}
.tk-start{
    width: 60px;
}
.tk-search{
    width: 360px;
    background: #333;
    border: 1px solid #6a6a6a;
    border-bottom: 0;
}
.tk-gap1{
    width: 188px;
}
.tk-app{
    width: 61px;
    background: #4a4a4a;
}
.tk-gap2{
    width: 125px;
}
.tk-orange{
    width: 61px;
    background: #a55c25;
}
.tk-clock{
    margin-left: 936px;
    color: #fff;
    font-size: 13px;
    line-height: 9px;
    padding-top: 7px;
    width: 123px;
}
.tk-line{
    width: 1px;
    background: #aaa;
}
```
